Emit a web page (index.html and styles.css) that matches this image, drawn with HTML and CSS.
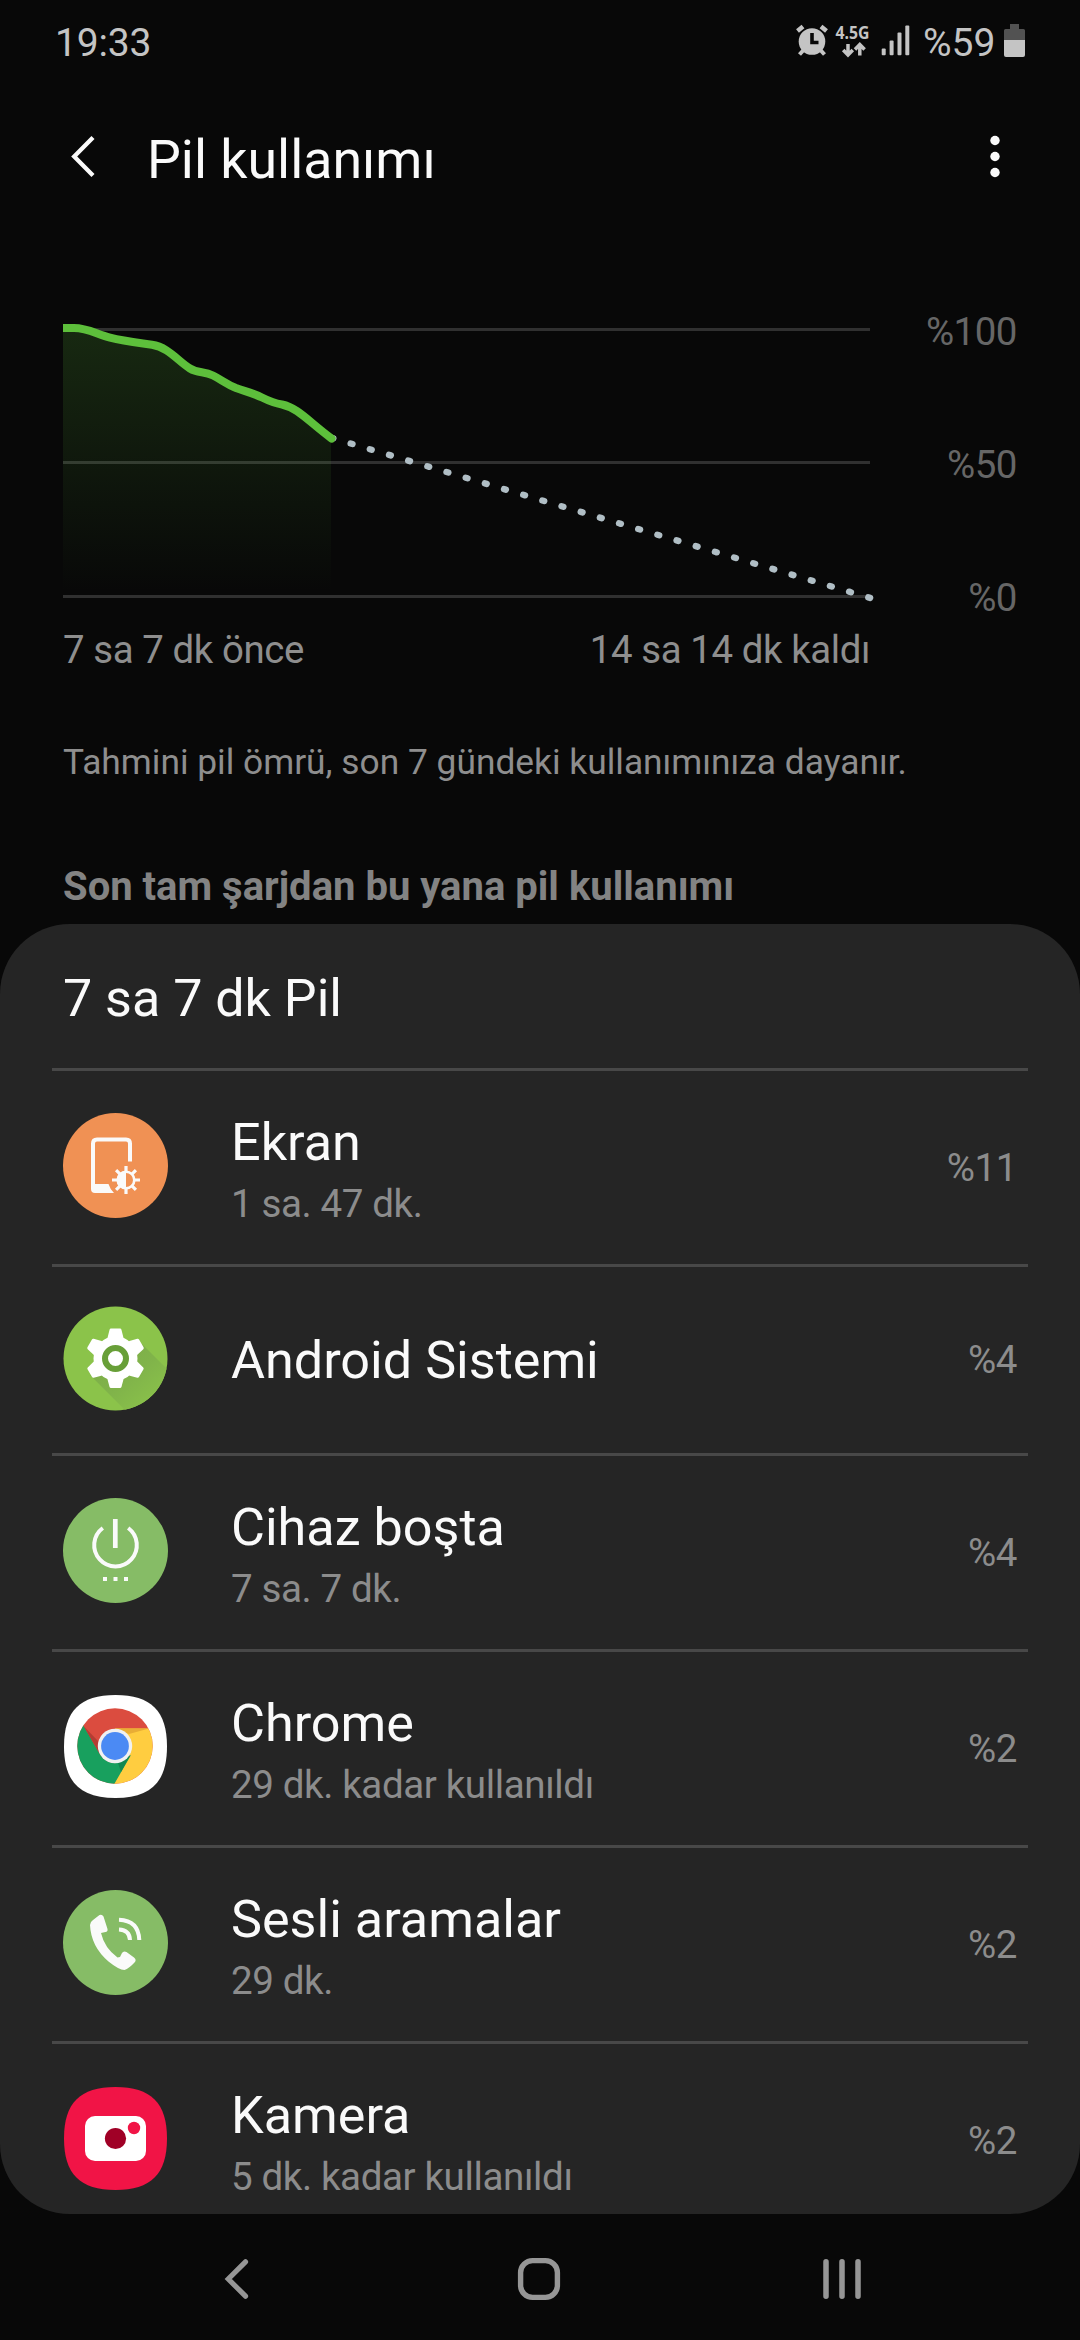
FILE: index.html
```html
<!DOCTYPE html>
<html lang="tr">
<head>
<meta charset="utf-8">
<title>Pil kullanımı</title>
<link rel="stylesheet" href="styles.css">
</head>
<body>
<div class="screen">
  <div class="status">
    <span class="clock">19:33</span>
    <div class="status-right">
      <svg class="status-icons" viewBox="790 0 130 85" width="130" height="85">
        <g fill="#c4c4c4" stroke="none">
          <circle cx="812" cy="41.500" r="13.300"/>
          <path d="M812 33v9.500h6.500" fill="none" stroke="#080808" stroke-width="3.600"/>
          <path d="M797.500 31l5.500-4.500M826.500 31l-5.500-4.500" fill="none" stroke="#c4c4c4" stroke-width="4.500"/>
          <path d="M804 49.500l-4.500 5M820 49.500l4.500 5" fill="none" stroke="#c4c4c4" stroke-width="4"/>
          <text class="net" x="835.500" y="39" textLength="34" lengthAdjust="spacingAndGlyphs">4.5G</text>
          <path d="M848 44v11M843.200 50l4.800 5 4.800-5M859.800 55.500v-11M855 49.500l4.800-5 4.800 5" fill="none" stroke="#c4c4c4" stroke-width="3.500"/>
          <rect x="881.700" y="48.500" width="4" height="6.800" rx="1"/>
          <rect x="889.600" y="40.500" width="4" height="14.800" rx="1"/>
          <rect x="897.500" y="32.500" width="4" height="22.800" rx="1"/>
          <rect x="905.300" y="25.500" width="4" height="29.800" rx="1"/>
        </g>
      </svg>
      <span class="percent">%59</span>
      <svg class="battery" viewBox="1003 0 23 85" width="23" height="85">
        <path d="M1010 24h9v5h4.500q1.500 0 1.500 1.500V41h-21V30.500q0-1.500 1.500-1.500h4.500z" fill="#525252"/>
        <path d="M1004 40h21v15q0 2-2 2h-17q-2 0-2-2z" fill="#c4c4c4"/>
      </svg>
    </div>
  </div>

  <header class="header">
    <svg class="back" viewBox="0 0 40 50" width="40" height="50"><path d="M32 5.500 13.200 24.500 32 43.500" fill="none" stroke="#fafafa" stroke-width="4.300"/></svg>
    <h1 class="title">Pil kullanımı</h1>
    <svg class="more" viewBox="0 0 20 50" width="20" height="50" fill="#fafafa"><circle cx="10" cy="8.500" r="4.700"/><circle cx="10" cy="24.500" r="4.700"/><circle cx="10" cy="40.500" r="4.700"/></svg>
  </header>

  <section class="chart">
    <svg class="plot" viewBox="0 309 900 312" width="900" height="312">
      <defs>
        <linearGradient id="area" gradientUnits="userSpaceOnUse" x1="0" y1="328" x2="0" y2="592">
          <stop offset="0" stop-color="#5dbf3b" stop-opacity=".18"/>
          <stop offset="1" stop-color="#5dbf3b" stop-opacity="0"/>
        </linearGradient>
        <clipPath id="left"><rect x="63" y="300" width="300" height="320"/></clipPath>
      </defs>
      <g fill="#303030"><rect x="63" y="328" width="807" height="3"/><rect x="63" y="461" width="807" height="3"/><rect x="63" y="595" width="807" height="3"/></g>
      <path d="M63 328H74C88 328 96 334 110 337.700C125 341.500 140 343 152 344.800C168 347 178 361 190 368.500C198 373.500 204 371 213 375.500C222 380 226 384 236 388C246 391.500 254 393.500 262 397.500C272 402.500 276 403.500 282 404.500C298 408 308 421 331 438V595H63z" fill="url(#area)"/>
      <path d="M331.500 437.800 871 598.200" fill="none" stroke="#b0bec5" stroke-width="6.400" stroke-linecap="round" stroke-dasharray="1.900 18.100"/>
      <path clip-path="url(#left)" d="M60 328H74C88 328 96 334 110 337.700C125 341.500 140 343 152 344.800C168 347 178 361 190 368.500C198 373.500 204 371 213 375.500C222 380 226 384 236 388C246 391.500 254 393.500 262 397.500C272 402.500 276 403.500 282 404.500C298 408 308 421 331.500 438.500" fill="none" stroke="#5dbf3b" stroke-width="8" stroke-linecap="round"/>
    </svg>
    <div class="scale"><span>%100</span><span>%50</span><span>%0</span></div>
  </section>
  <div class="range"><span>7 sa 7 dk önce</span><span>14 sa 14 dk kaldı</span></div>
  <p class="note">Tahmini pil ömrü, son 7 gündeki kullanımınıza dayanır.</p>
  <h2 class="section-title">Son tam şarjdan bu yana pil kullanımı</h2>

  <main class="panel">
    <div class="panel-head">7 sa 7 dk Pil</div>

    <div class="row">
      <svg class="icon" viewBox="0 0 105 105">
        <circle cx="52.500" cy="52.500" r="52.500" fill="#f09154"/>
        <path d="M67 48.500V30.500q0-4-4-4H34q-4 0-4 4V74" fill="none" stroke="#fafafa" stroke-width="4"/>
        <path d="M28 71h17.500q1.500 5 5.500 9H32q-4 0-4-4z" fill="#fafafa"/>
        <g stroke="#fafafa" stroke-width="3.200"><path d="M63 53v6M63 75v6M49 67h6M71 67h6M53.100 57.100l4.200 4.200M68.700 72.700l4.200 4.200M53.100 76.900l4.200-4.200M68.700 61.300l4.200-4.200"/></g>
        <circle cx="63" cy="67" r="8.300" fill="none" stroke="#fafafa" stroke-width="2.600"/>
        <path d="M63 58a9 9 0 0 0 0 18z" fill="#fafafa"/>
      </svg>
      <div class="text"><span class="name">Ekran</span><span class="sub">1 sa. 47 dk.</span></div>
      <span class="pct">%11</span>
    </div>

    <div class="row single">
      <svg class="icon" viewBox="0 0 105 105">
        <defs><clipPath id="disc"><circle cx="52.500" cy="52.500" r="52"/></clipPath>
        <linearGradient id="shade" x1="0" y1="0" x2="1" y2="1"><stop offset="0" stop-color="#7cab49"/><stop offset=".5" stop-color="#80b34a"/><stop offset=".9" stop-color="#8bc34a"/></linearGradient></defs>
        <circle cx="52.500" cy="52.500" r="52" fill="#8bc34a"/>
        <path clip-path="url(#disc)" d="M27 69 62 104H106V65L79 38z" fill="url(#shade)"/>
        <g fill="#fff" stroke="#fff" stroke-width="3" stroke-linejoin="round">
          <path d="M46 32 48 24h9l2 8v41l-2 7.500h-9L46 73z"/>
          <path d="M46 32 48 24h9l2 8v41l-2 7.500h-9L46 73z" transform="rotate(60 52.500 52.300)"/>
          <path d="M46 32 48 24h9l2 8v41l-2 7.500h-9L46 73z" transform="rotate(-60 52.500 52.300)"/>
          <circle cx="52.500" cy="52.500" r="20.500"/>
        </g>
        <circle cx="52.500" cy="52.500" r="10.500" fill="#fff" stroke="#689f38" stroke-width="6"/>
      </svg>
      <div class="text"><span class="name">Android Sistemi</span></div>
      <span class="pct">%4</span>
    </div>

    <div class="row">
      <svg class="icon" viewBox="0 0 105 105">
        <circle cx="52.500" cy="52.500" r="52.500" fill="#86bc66"/>
        <path d="M39.800 30a21.300 21.300 0 1 0 25.400 0" fill="none" stroke="#fafafa" stroke-width="4"/>
        <path d="M52.300 21v29" stroke="#fafafa" stroke-width="4.700"/>
        <path d="M40 79h4v4h-4zM50.500 79h4v4h-4zM61 79h4v4h-4z" fill="#fafafa"/>
      </svg>
      <div class="text"><span class="name">Cihaz boşta</span><span class="sub">7 sa. 7 dk.</span></div>
      <span class="pct">%4</span>
    </div>

    <div class="row">
      <svg class="icon" viewBox="0 0 105 105">
        <defs><clipPath id="wheel"><circle cx="52" cy="52" r="37.700"/></clipPath></defs>
        <path d="M52.500 1C88 1 104 17 104 52.500S88 104 52.500 104 1 88 1 52.500 17 1 52.500 1z" fill="#fff"/>
        <g clip-path="url(#wheel)">
          <rect x="10" y="10" width="90" height="90" fill="#db4c3f"/>
          <path d="M52 34.600H100V95H48L66.700 61z" fill="#ffcd40"/>
          <path d="M52 34.600H86L66 40z" fill="#e9ad35"/>
          <path d="M0 0 19.500 30 37 60.500Q43 69 52 69.200L68 61 49.500 93V100H0z" fill="#18a05e"/>
          <path d="M55 69 67.200 61.500 58 78z" fill="#128650"/>
          <path d="M20.500 32 36.500 59.500 35 47z" fill="#b43c33"/>
        </g>
        <circle cx="52" cy="52" r="17.200" fill="#f1f1f1"/><circle cx="52" cy="52" r="13.900" fill="#4b8af4"/>
      </svg>
      <div class="text"><span class="name">Chrome</span><span class="sub">29 dk. kadar kullanıldı</span></div>
      <span class="pct">%2</span>
    </div>

    <div class="row">
      <svg class="icon" viewBox="0 0 105 105">
        <circle cx="52.500" cy="52.500" r="52.500" fill="#86bc66"/>
        <path d="M36.500 25q2.500-1 4 1.500L44.500 39q.5 2.500-2 3L38 43Q41.500 58 54.500 67.500L57 67l2-4q1.500-2.500 4.500-1L71 67.500q3 2.500.5 5Q66 78.500 61.500 80 56 80 45.500 71.500 28 56.500 27 35q0-3 3-5z" fill="#fafafa"/>
        <path d="M56 39.500q10.500.5 11 10.500M56 29.800q19.500.7 20.300 20.200" fill="none" stroke="#fafafa" stroke-width="4"/>
      </svg>
      <div class="text"><span class="name">Sesli aramalar</span><span class="sub">29 dk.</span></div>
      <span class="pct">%2</span>
    </div>

    <div class="row">
      <svg class="icon" viewBox="0 0 105 105">
        <path d="M52.500 1C88 1 104 17 104 52.500S88 104 52.500 104 1 88 1 52.500 17 1 52.500 1z" fill="#f11446"/>
        <rect x="22" y="30" width="61" height="45" rx="10" fill="#fff"/>
        <circle cx="52.500" cy="52.500" r="10.600" fill="#a00026"/><circle cx="71" cy="42" r="6.200" fill="#f11446"/>
      </svg>
      <div class="text"><span class="name">Kamera</span><span class="sub">5 dk. kadar kullanıldı</span></div>
      <span class="pct">%2</span>
    </div>
  </main>

  <nav class="nav">
    <svg viewBox="0 0 60 60" width="60" height="60"><path d="M39.500 12.800 22.300 30 39.500 47.200" fill="none" stroke="#969696" stroke-width="5.200" stroke-linecap="round"/></svg>
    <svg viewBox="0 0 60 60" width="60" height="60"><rect x="11.600" y="11.600" width="36.800" height="36.800" rx="12" fill="none" stroke="#969696" stroke-width="5.400"/></svg>
    <svg viewBox="0 0 60 60" width="60" height="60"><path d="M14 12.700v34.600M30 12.700v34.600M46 12.700v34.600" stroke="#969696" stroke-width="5.500" stroke-linecap="round"/></svg>
  </nav>
</div>
</body>
</html>
```

FILE: styles.css
```css
* { box-sizing: border-box; }
body { margin: 0; background: #080808; font-family: Roboto, "Noto Sans", sans-serif; }
svg { display: block; flex: none; }
.screen { width: 1080px; height: 2340px; display: flex; flex-direction: column; overflow: hidden; }
.screen > * { flex: none; }

.status { height: 85px; padding: 0 54px 0 55px; display: flex; justify-content: space-between; align-items: center; color: #c4c4c4; font-size: 39px; line-height: 86px; }
.clock { font-size: 39px; letter-spacing: -0.2px; }
.status-right { display: flex; align-items: center; }
.net { font: 700 17px "Open Sans", sans-serif; }
.percent { width: 83px; padding: 0 0 0 3px; }

.header { height: 149px; padding: 0 75px 0 61px; display: flex; align-items: center; }
.back, .more { margin-bottom: 6px; }
.title { flex: 1; margin: 0 0 0 46px; color: #fafafa; font-size: 53.7px; font-weight: 400; line-height: 70px; }

.chart { margin-top: 75px; height: 312px; display: flex; justify-content: space-between; padding-right: 63px; }
.scale { display: flex; flex-direction: column; justify-content: space-between; text-align: right; color: #666; font-size: 38.5px; line-height: 46px; letter-spacing: -0.5px; }
.range { width: 807px; height: 57px; margin-left: 63px; display: flex; justify-content: space-between; color: #8e8e8e; font-size: 38.4px; line-height: 58px; letter-spacing: -0.4px; }
.note { margin: 59px 63px 0; color: #8e8e8e; font-size: 35.35px; line-height: 50px; white-space: nowrap; }
.section-title { margin: 75px 63px 12px; color: #838383; font-size: 40px; font-weight: 700; line-height: 50px; white-space: nowrap; }

.panel { height: 1290px; padding: 0 52px; background: #252525; border-radius: 70px; overflow: hidden; }
.panel-head { height: 144px; padding: 5px 11px 0; color: #fafafa; font-size: 52px; line-height: 140px; }
.row { height: 196px; padding: 0 11px; border-top: 3px solid #484848; display: flex; align-items: center; }
.row.single { height: 189px; }
.icon { width: 105px; height: 105px; margin: 0 63px 4px 0; }
.single .icon { margin-bottom: 3px; }
.text { flex: 1; padding-top: 2px; display: flex; flex-direction: column; }
.name { color: #fafafa; font-size: 52.15px; line-height: 70px; }
.sub { color: #8c8c8c; font-size: 38.6px; line-height: 51px; letter-spacing: -0.4px; }
.pct { color: #8c8c8c; font-size: 38.5px; line-height: 50px; letter-spacing: -0.4px; }

.nav { height: 126px; padding: 4px 208px 0 206px; display: flex; justify-content: space-between; align-items: center; }
```
